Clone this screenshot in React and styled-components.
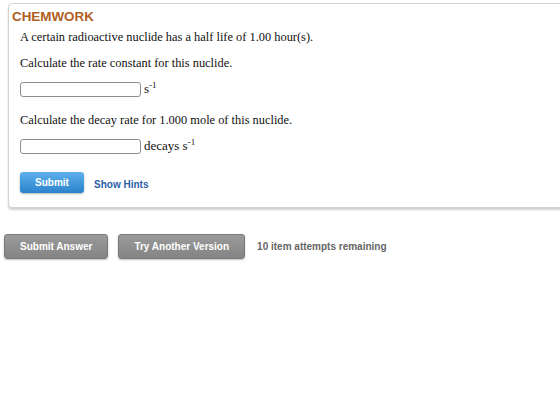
import styled, { createGlobalStyle } from "styled-components";

const Global = createGlobalStyle`
    body{
        margin: 0;
        background: #fff;
        font-family: "Liberation Serif", "Times New Roman", serif;
    }
`

export default function App(){
    return (
        <Page>
            <Global />
            <Card>
                <Brand>CHEMWORK</Brand>
                <Para>A certain radioactive nuclide has a half life of 1.00 hour(s).</Para>
                <Para>Calculate the rate constant for this nuclide.</Para>
                <AnswerRow>
                    <Field />
                    <Unit>s<sup>-1</sup></Unit>
                </AnswerRow>
                <Para>Calculate the decay rate for 1.000 mole of this nuclide.</Para>
                <AnswerRow>
                    <Field />
                    <Unit>decays s<sup>-1</sup></Unit>
                </AnswerRow>
                <Actions>
                    <SubmitButton>Submit</SubmitButton>
                    <HintLink>Show Hints</HintLink>
                </Actions>
            </Card>
            <Footer>
                <GrayButton>Submit Answer</GrayButton>
                <GrayButton>Try Another Version</GrayButton>
                <Attempts>10 item attempts remaining</Attempts>
            </Footer>
        </Page>
    );
}

const Page = styled.div`
    width: 560px;
    height: 401px;
    overflow: hidden;
    padding-top: 3px;
    box-sizing: border-box;
`

const Card = styled.div`
    margin-left: 8px;
    width: 570px;
    box-sizing: border-box;
    border: 1px solid #d4d4d4;
    border-radius: 4px;
    box-shadow: 0 2px 2px rgba(0,0,0,0.18);
    padding: 5px 0 14px 11px;
    background: #fff;
`

const Brand = styled.div`
    font-family: "Liberation Sans", Arial, sans-serif;
    font-weight: bold;
    font-size: 13.4px;
    color: #b0601f;
    margin-left: -8px;
    line-height: 16px;
`

const Para = styled.p`
    margin: 4px 0 10px 0;
    font-size: 12.4px;
    line-height: 16px;
    color: #111;
`

const AnswerRow = styled.div`
    display: flex;
    align-items: center;
    margin-bottom: 15px;
`

const Field = styled.input`
    width: 121px;
    height: 15px;
    box-sizing: border-box;
    border: 1px solid #8e8e8e;
    border-radius: 3px;
    padding: 0;
    margin: 0;
`

const Unit = styled.span`
    font-size: 13px;
    margin-left: 3px;
    color: #111;

    sup{
        font-size: 9px;
        vertical-align: 5px;
        line-height: 0;
    }
`

const Actions = styled.div`
    display: flex;
    align-items: center;
    gap: 10px;
    margin-top: 18px;
`

const SubmitButton = styled.button`
    width: 64px;
    height: 21px;
    border: none;
    border-radius: 3px;
    background: linear-gradient(#5cb1eb, #2c83cc);
    box-shadow: 0 1px 2px rgba(0,0,0,0.3);
    color: #fff;
    font-family: "Liberation Sans", Arial, sans-serif;
    font-weight: bold;
    font-size: 10px;
    padding: 0;
`

const HintLink = styled.span`
    font-family: "Liberation Sans", Arial, sans-serif;
    font-weight: bold;
    font-size: 10px;
    color: #2d5fa6;
    margin-top: 3px;
`

const Footer = styled.div`
    display: flex;
    align-items: center;
    gap: 10px;
    padding: 26px 0 0 4px;
`

const GrayButton = styled.button`
    height: 25px;
    padding: 0 15px;
    border: 1px solid #7a7a7a;
    border-radius: 3px;
    background: linear-gradient(#9a9a9a, #848484);
    box-shadow: 0 1px 2px rgba(0,0,0,0.25);
    color: #fff;
    font-family: "Liberation Sans", Arial, sans-serif;
    font-weight: bold;
    font-size: 10px;
`

const Attempts = styled.span`
    margin-left: 2px;
    font-family: "Liberation Sans", Arial, sans-serif;
    font-weight: bold;
    font-size: 10px;
    color: #666;
`
